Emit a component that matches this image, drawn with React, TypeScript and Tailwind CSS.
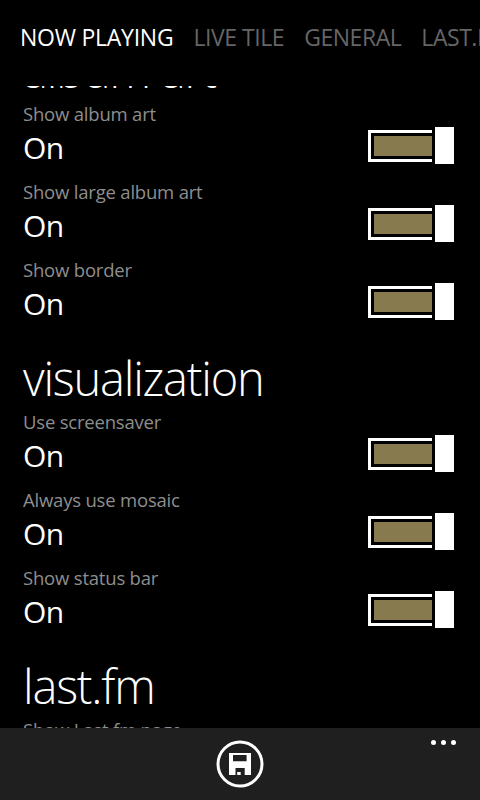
import React from 'react';

const Toggle: React.FC = () => (
    <div className="flex items-center">
        <div className="w-16 h-8 border-[3px] border-r-0 border-white p-[3px] pr-0">
            <div className="h-5 bg-[#877a4e]" />
        </div>
        <div className="ml-[3px] w-[19px] h-[37px] bg-white" />
    </div>
);

const Setting: React.FC<{ label: string }> = ({ label }) => (
    <div className="h-[78px] flex justify-between pr-[26px]">
        <div>
            <div className="text-[18.5px] leading-[24px] tracking-[-0.2px] text-[#8e8e8e]">{label}</div>
            <div className="mt-1 text-[30px] leading-[36px] tracking-[-0.5px]">On</div>
        </div>
        <div className="pt-[25px]"><Toggle /></div>
    </div>
);

const SectionTitle: React.FC<{ children: React.ReactNode }> = ({ children }) => (
    <h2 className="h-[74px] pt-[10px] text-[47px] leading-[64px] font-light tracking-[-1.2px] whitespace-nowrap">{children}</h2>
);

const SaveIcon: React.FC = () => (
    <svg className="w-12 h-12" viewBox="0 0 48 48" fill="none">
        <circle cx="24" cy="24" r="22" stroke="#fff" strokeWidth="3" />
        <path fill="#fff" fillRule="evenodd" d="M13 13h22v22H28.7v-7H19.5v7H13zM17 15v6.3h13.6V15z" />
        <path fill="#fff" d="M21.2 32h3.5v3h-3.5z" />
    </svg>
);

const tabs = ['NOW PLAYING', 'LIVE TILE', 'GENERAL', 'LAST.FM'];

const sections = [
    { title: 'album art', items: ['Show album art', 'Show large album art', 'Show border'] },
    { title: 'visualization', items: ['Use screensaver', 'Always use mosaic', 'Show status bar'] },
    { title: 'last.fm', items: ['Show Last.fm page'] },
];

export default function App() {
    return (
        <div className="w-[480px] h-[800px] flex flex-col overflow-hidden bg-black text-white font-['Open_Sans',sans-serif]">
            <nav className="h-[86px] shrink-0 flex gap-5 pl-5 pt-5 text-[23px] leading-[34px] whitespace-nowrap overflow-hidden">
                {tabs.map((tab, i) => (
                    <span key={tab} className={i === 0 ? 'text-white tracking-[-0.25px]' : 'text-[#666] tracking-[-0.45px]'}>{tab}</span>
                ))}
            </nav>
            <main className="flex-1 min-h-0 overflow-hidden pl-[23px]">
                <div className="-mt-[58px]">
                    {sections.map((section) => (
                        <section key={section.title} className="h-[308px]">
                            <SectionTitle>{section.title}</SectionTitle>
                            {section.items.map((item) => <Setting key={item} label={item} />)}
                        </section>
                    ))}
                </div>
            </main>
            <footer className="h-[72px] shrink-0 relative flex justify-center pt-3 bg-[#1f1f1f]">
                <SaveIcon />
                <div className="absolute right-6 top-3 flex gap-[5px]">
                    <span className="size-[5px] rounded-full bg-white" />
                    <span className="size-[5px] rounded-full bg-white" />
                    <span className="size-[5px] rounded-full bg-white" />
                </div>
            </footer>
        </div>
    );
}
